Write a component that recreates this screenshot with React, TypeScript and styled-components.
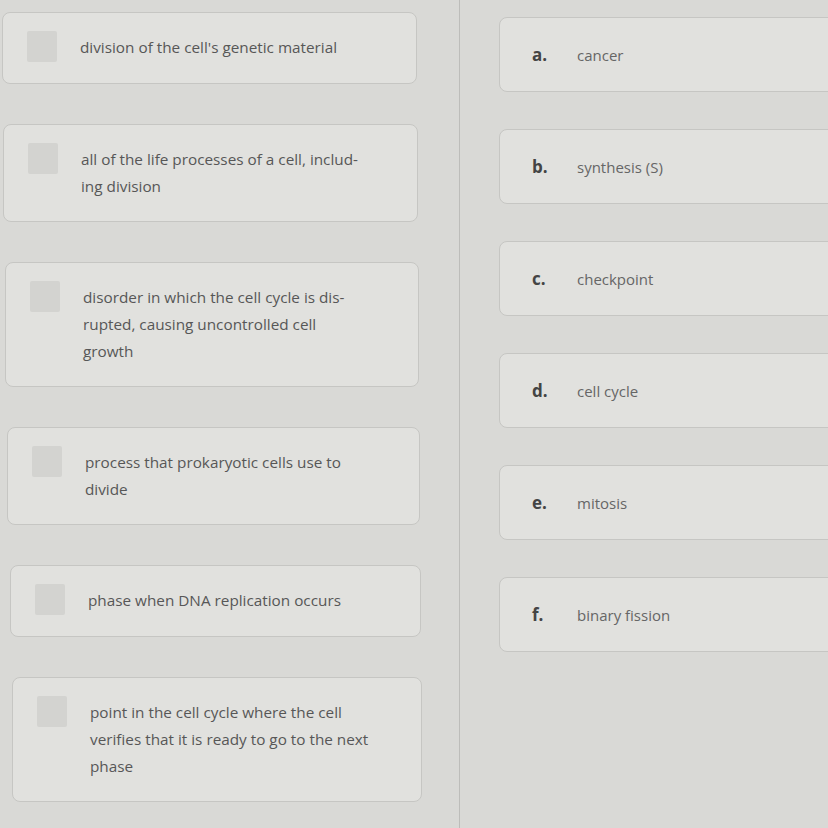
import styled, { createGlobalStyle } from "styled-components"

const GlobalStyle = createGlobalStyle`
  html, body {
    margin: 0;
    padding: 0;
    background: #d9d9d6;
  }
  body {
    font-family: "Open Sans", "Liberation Sans", sans-serif;
    color: #555;
  }
`

const definitions = [
  { text: "division of the cell's genetic material", indent: 2 },
  { text: "all of the life processes of a cell, includ-\ning division", indent: 3 },
  { text: "disorder in which the cell cycle is dis-\nrupted, causing uncontrolled cell\ngrowth", indent: 5 },
  { text: "process that prokaryotic cells use to\ndivide", indent: 7 },
  { text: "phase when DNA replication occurs", indent: 10 },
  { text: "point in the cell cycle where the cell\nverifies that it is ready to go to the next\nphase", indent: 12 },
]

const terms = [
  { label: "a.", text: "cancer" },
  { label: "b.", text: "synthesis (S)" },
  { label: "c.", text: "checkpoint" },
  { label: "d.", text: "cell cycle" },
  { label: "e.", text: "mitosis" },
  { label: "f.", text: "binary fission" },
]

const App = () => {
  return (
    <>
      <GlobalStyle />
      <Page>
        <LeftColumn>
          {definitions.map((d) => (
            <DefinitionCard key={d.text} $indent={d.indent}>
              <DropSlot />
              <DefinitionText>
                {d.text.split("\n").map((line) => (
                  <span key={line}>{line}</span>
                ))}
              </DefinitionText>
            </DefinitionCard>
          ))}
        </LeftColumn>
        <RightColumn>
          {terms.map((t) => (
            <TermCard key={t.label}>
              <TermLabel>{t.label}</TermLabel>
              <TermText>{t.text}</TermText>
            </TermCard>
          ))}
        </RightColumn>
      </Page>
    </>
  )
}
export default App

const Page = styled.main`
  display: flex;
  width: 828px;
  height: 828px;
  overflow: hidden;
`

const LeftColumn = styled.section`
  width: 459px;
  flex-shrink: 0;
  display: flex;
  flex-direction: column;
  gap: 40px;
  padding-top: 12px;
  box-sizing: border-box;
`

const DefinitionCard = styled.div<{ $indent: number }>`
  display: flex;
  align-items: flex-start;
  gap: 23px;
  margin-left: ${(p) => p.$indent}px;
  width: ${(p) => 416 - p.$indent / 2}px;
  padding: 21px 20px 21px 24px;
  box-sizing: border-box;
  background: #e1e1de;
  border: 1px solid #c6c6c3;
  border-radius: 8px;
`

const DropSlot = styled.div`
  width: 30px;
  height: 31px;
  margin-top: -3px;
  flex-shrink: 0;
  background: #d3d3d0;
  border-radius: 2px;
`

const DefinitionText = styled.p`
  margin: 0;
  font-size: 15.3px;
  line-height: 27px;
  color: #575757;
  span {
    display: block;
    white-space: nowrap;
  }
`

const RightColumn = styled.section`
  flex: 1;
  display: flex;
  flex-direction: column;
  gap: 37px;
  padding: 17px 0 0 39px;
  border-left: 1px solid #bdbdba;
  box-sizing: border-box;
`

const TermCard = styled.div`
  display: flex;
  align-items: center;
  width: 400px;
  height: 75px;
  padding-left: 32px;
  box-sizing: border-box;
  background: #e1e1de;
  border: 1px solid #c6c6c3;
  border-radius: 8px;
`

const TermLabel = styled.span`
  width: 45px;
  flex-shrink: 0;
  font-size: 17px;
  font-weight: 700;
  color: #444;
`

const TermText = styled.span`
  font-size: 15px;
  color: #666;
`
